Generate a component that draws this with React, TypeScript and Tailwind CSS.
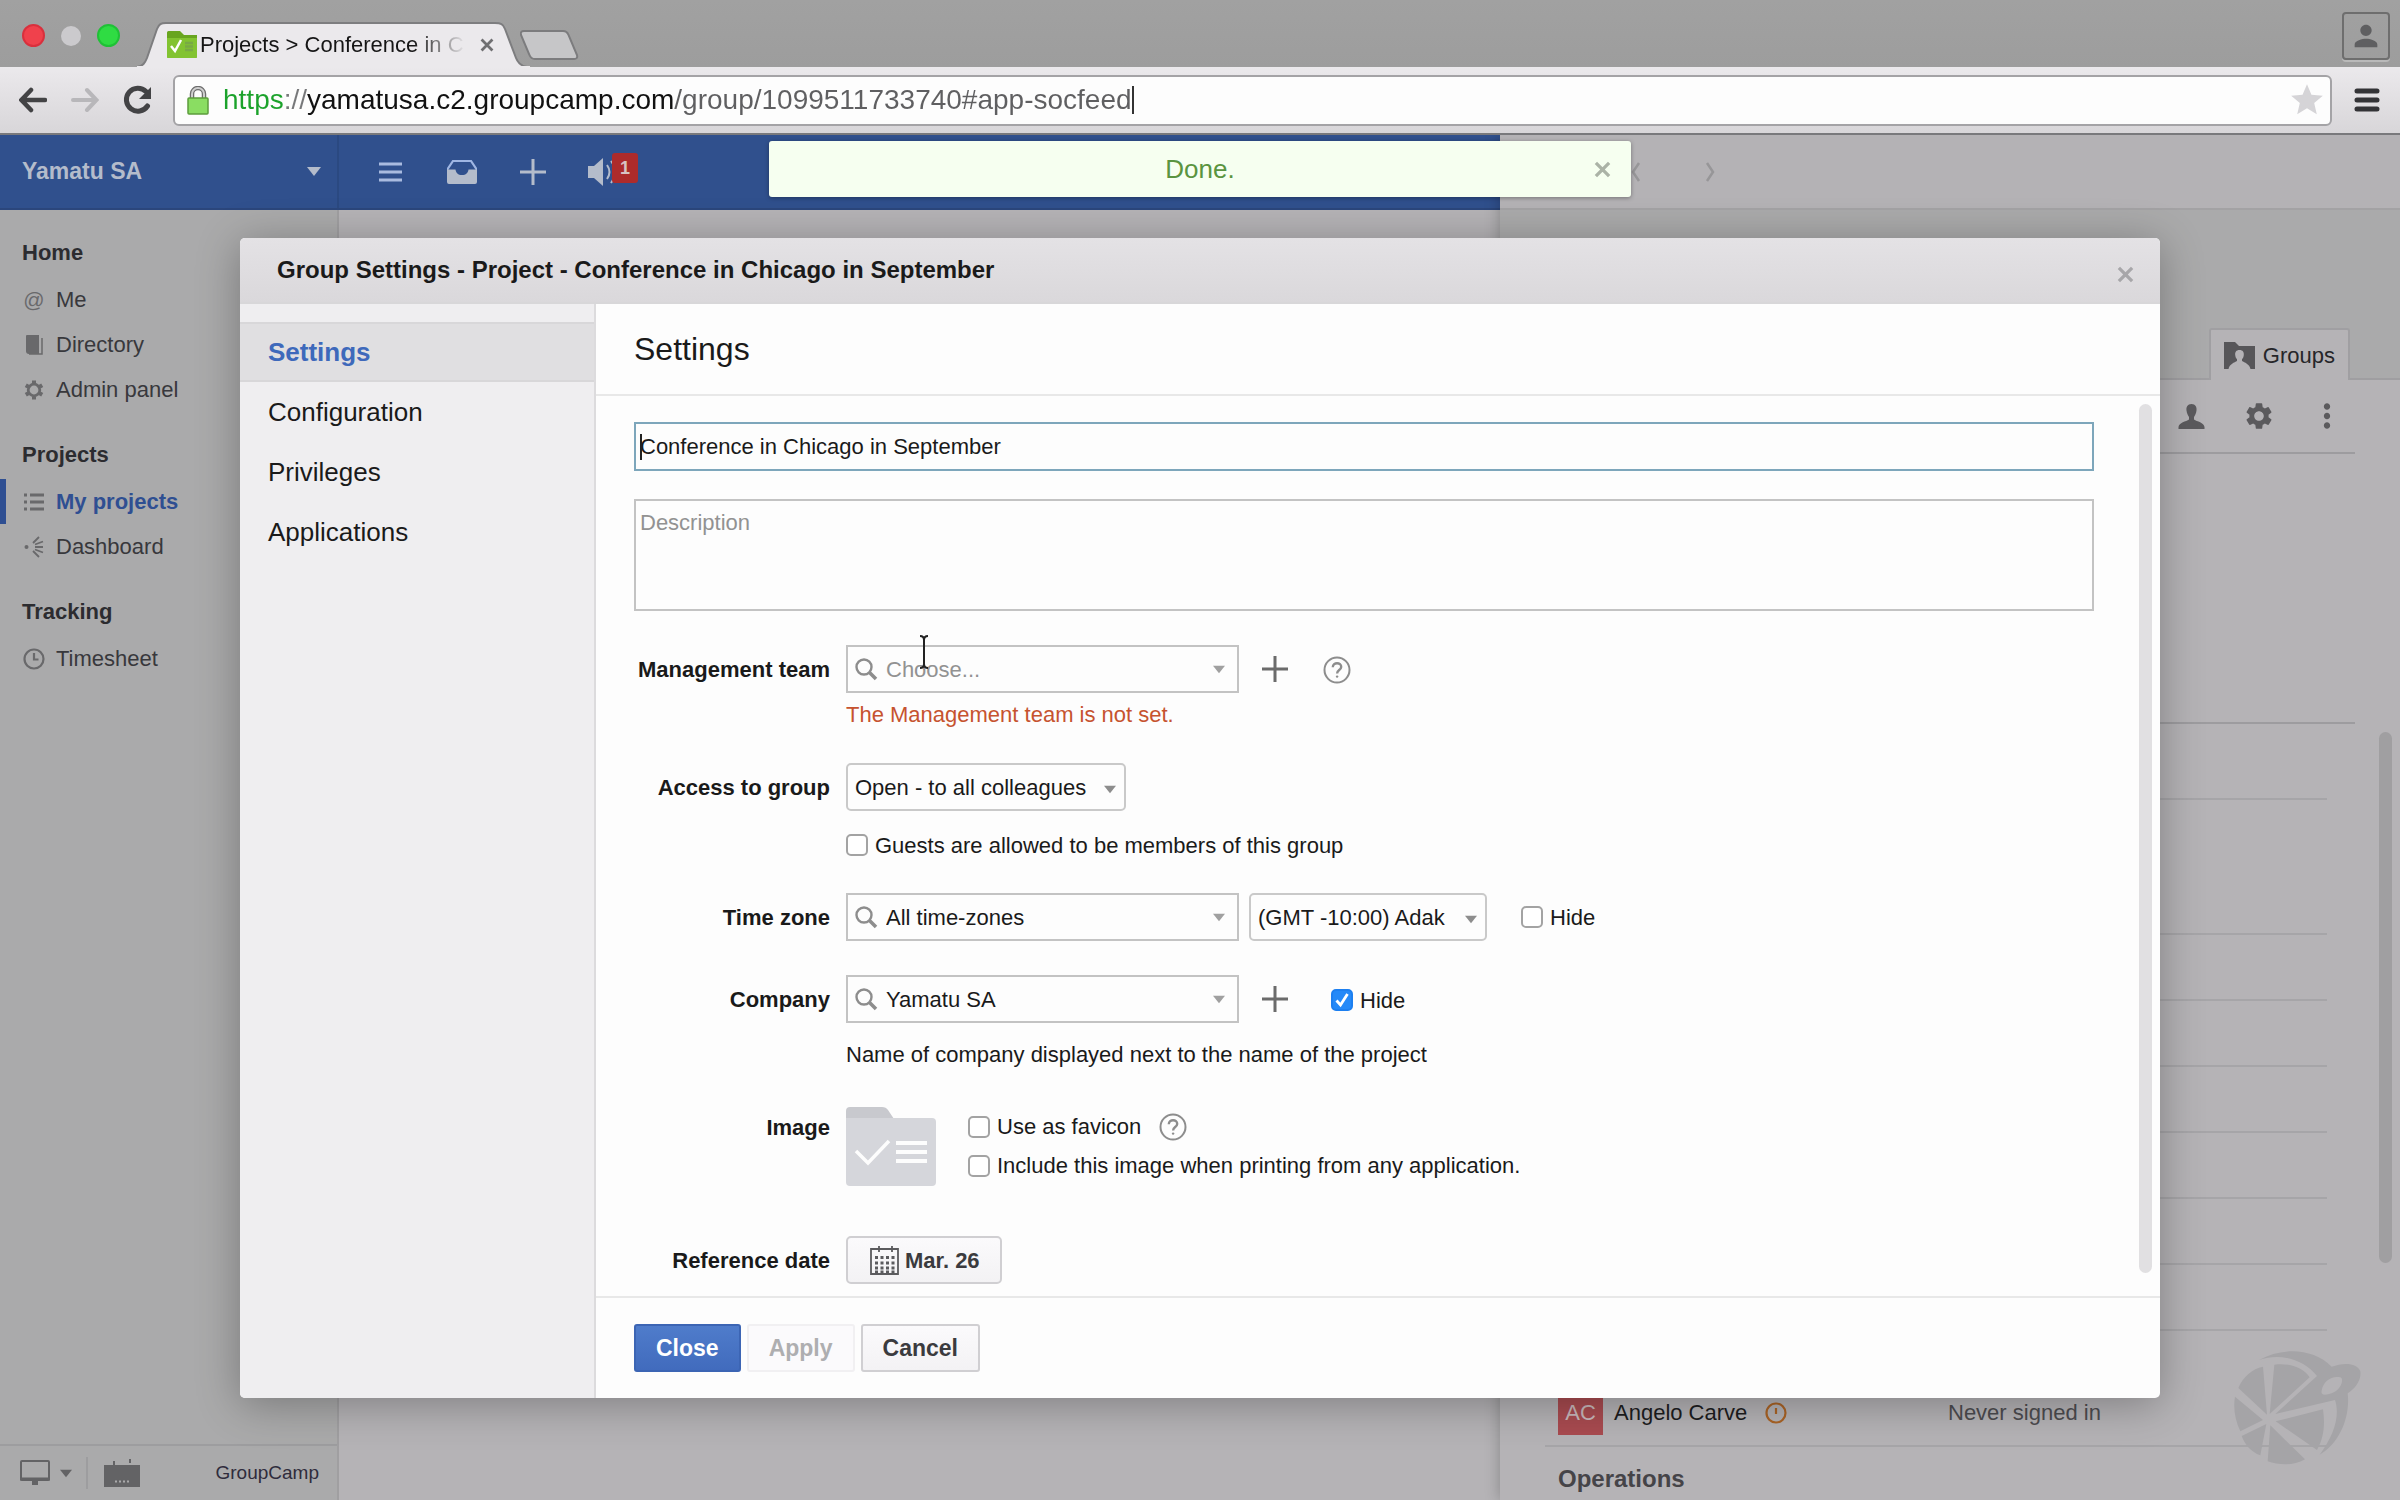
import React, { useState } from 'react';
import { MdPerson, MdSettings, MdStar, MdMoreVert } from 'react-icons/md';

const HEADING = 'flex h-[49px] items-center pl-[22px] font-bold text-[#2c2c30]';

const Caret: React.FC<{ className?: string }> = ({ className }) => (
  <svg className={className} width="14" height="9" viewBox="0 0 14 9" fill="currentColor" aria-hidden="true"><path d="M0 0h14L7 9z" /></svg>
);

const Cross: React.FC<{ size: number }> = ({ size }) => (
  <svg width={size} height={size} viewBox="0 0 18 18" stroke="currentColor" strokeWidth="3.500" aria-hidden="true"><path d="M2 2l14 14M16 2L2 16" /></svg>
);

const Plus: React.FC = () => (
  <svg width="28" height="28" viewBox="0 0 28 28" stroke="currentColor" strokeWidth="3" aria-hidden="true"><path d="M14 1v26M1 14h26" /></svg>
);

const Help: React.FC = () => (
  <button type="button" aria-label="Help" className="text-[#8d8d8d]">
    <svg width="28" height="28" viewBox="0 0 28 28" fill="none" stroke="currentColor" strokeWidth="2">
      <circle cx="14" cy="14" r="12.5" />
      <path d="M9.8 11.2c0-5.4 8.6-5.2 8.4-.2-.1 3-4.1 3.100-4.100 6.400" strokeWidth="2.400" />
      <circle cx="14.100" cy="20.600" r="1.200" fill="currentColor" stroke="none" />
    </svg>
  </button>
);

/* ---------- Browser window ---------- */

const TabStrip: React.FC = () => (
  <div className="flex h-[67px] items-end bg-gradient-to-b from-[#a1a1a1] to-[#9d9d9d]">
    <div className="flex h-full items-center gap-4 pt-1 pl-[22px]">
      <span className="h-[23px] w-[23px] rounded-full border-2 border-[#d9303d] bg-[#f0414c]" />
      <span className="h-5 w-5 rounded-full bg-[#cbcacd]" />
      <span className="h-[23px] w-[23px] rounded-full border-2 border-[#1fc136] bg-[#2fdc43]" />
    </div>
    <div className="relative ml-[17px] flex h-[45px] w-[393px] items-center pl-[30px]">
      <svg className="absolute inset-0" width="393" height="45" viewBox="0 0 393 45" aria-hidden="true">
        <path d="M0 45C6 44 8 41 10 36L20 7C22 2 24 1 29 1H358C364 1 366 2 368 7L379 36C381 41 384 44 390 45z" fill="#ebe9ec" stroke="#7d7d7f" strokeWidth="2" />
        <path d="M0 45h393" stroke="#ebe9ec" strokeWidth="2" />
      </svg>
      <svg className="relative shrink-0" width="30" height="27" viewBox="0 0 30 27" aria-hidden="true">
        <path d="M0 1.500Q0 0 1.500 0H13l4 4H30V25.500Q30 27 28.500 27H1.500Q0 27 0 25.500z" fill="#68a51f" />
        <path d="M0 7h30v18.500Q30 27 28.500 27H1.500Q0 27 0 25.500z" fill="#82c331" />
        <path d="M4 15l4 5 6-11" fill="none" stroke="#fff" strokeWidth="2.500" />
        <path d="M18 12h8M18 15.500h8M18 19h8" stroke="#78a945" strokeWidth="2.500" />
      </svg>
      <span className="relative ml-[3px] w-[266px] overflow-hidden whitespace-nowrap bg-gradient-to-r from-[#151515] from-80% to-transparent bg-clip-text text-transparent">Projects &gt; Conference in C</span>
      <button type="button" aria-label="Close tab" className="relative ml-3.5 text-[#6f6f71]"><Cross size={14} /></button>
    </div>
    <button type="button" aria-label="New tab" className="mb-[7px] -ml-2.5">
      <svg width="59" height="30" viewBox="0 0 59 30"><path d="M4 1H43Q47 1 48.500 5L57 25Q58 29 54 29H15Q11 29 9.500 25L1 5Q0 1 4 1z" fill="#c6c6c8" stroke="#7c7c7e" strokeWidth="2" /></svg>
    </button>
    <button type="button" aria-label="Profile" className="mr-2.5 mb-[7px] ml-auto grid h-12 w-12 place-items-center rounded border-2 border-[#6e6e6e] text-[#5f5f61] shadow-[0_2px_0_#b9b9b9]">
      <MdPerson size={34} />
    </button>
  </div>
);

const Toolbar: React.FC = () => (
  <div className="flex h-[68px] items-center border-b-2 border-[#79797c] bg-gradient-to-b from-[#ebe9ec] to-[#d8d6d9] pr-5 pl-[19px]">
    <div className="flex items-center gap-6">
      <button type="button" aria-label="Back" className="text-[#434345]">
        <svg width="28" height="26" viewBox="0 0 28 26" fill="none" stroke="currentColor" strokeWidth="4.500" strokeLinecap="round"><path d="M26 13H3M12 3L2.500 13 12 23" /></svg>
      </button>
      <button type="button" aria-label="Forward" className="text-[#b8b7ba]">
        <svg width="28" height="26" viewBox="0 0 28 26" fill="none" stroke="currentColor" strokeWidth="4" strokeLinecap="round"><path d="M2 13h23M16 3l9.500 10L16 23" /></svg>
      </button>
      <button type="button" aria-label="Reload" className="text-[#434345]">
        <svg width="30" height="30" viewBox="0 0 30 30" fill="none" stroke="currentColor" strokeWidth="5"><path d="M24.500 21A11.500 11.500 0 1 1 23 6.500" strokeLinecap="round" /><path d="M28 2v12H16z" fill="currentColor" stroke="none" /></svg>
      </button>
    </div>
    <div className="ml-5 flex h-[51px] flex-1 items-center rounded-md border-2 border-[#a4a3a6] bg-[#fdfdfd] pr-1 pl-3">
      <svg width="22" height="29" viewBox="0 0 22 29" aria-hidden="true">
        <path d="M5 12V8a6 6 0 0 1 12 0v4" fill="none" stroke="#6d6d6d" strokeWidth="4.500" />
        <path d="M5 12V8a6 6 0 0 1 12 0v4" fill="none" stroke="#cfcfcf" strokeWidth="2" />
        <rect x="1" y="12" width="20" height="16" rx="1" fill="#8add62" stroke="#5c9c3c" strokeWidth="1.500" />
      </svg>
      <input
        aria-label="Address"
        readOnly
        value="https://yamatusa.c2.groupcamp.com/group/1099511733740#app-socfeed"
        className="ml-3.5 field-sizing-content bg-[linear-gradient(to_right,#1ba22b_60px,#77787a_60px,#77787a_84px,#111_84px,#111_450px,#5f5f61_450px)] bg-clip-text text-[28px] leading-9 text-transparent outline-none"
      />
      <span className="h-7 w-0.5 bg-[#333]" />
      <button type="button" aria-label="Bookmark" className="ml-auto text-[#d5d4d7]"><MdStar size={38} /></button>
    </div>
    <button type="button" aria-label="Menu" className="ml-[22px] text-[#333336]">
      <svg width="26" height="26" viewBox="0 0 26 26" stroke="currentColor" strokeWidth="5" strokeLinecap="round"><path d="M3 4h20M3 13h20M3 22h20" /></svg>
    </button>
  </div>
);

/* ---------- Application behind the dialog ---------- */

const NAV = [
  { title: 'Home', items: ['Me', 'Directory', 'Admin panel'] },
  { title: 'Projects', items: ['My projects', 'Dashboard'] },
  { title: 'Tracking', items: ['Timesheet'] },
];

const NAV_ICONS: Record<string, React.ReactNode> = {
  'Me': <span className="text-[21px] leading-none">@</span>,
  'Directory': (
    <svg width="20" height="20" viewBox="0 0 20 20"><path d="M3 0H15V19H5Q2 19 2 16V1Q2 0 3 0z" fill="currentColor" /><path d="M5 19H18V3" fill="none" stroke="currentColor" strokeWidth="1.500" /></svg>
  ),
  'Admin panel': (
    <svg width="20" height="20" viewBox="0 0 20 20" fill="none" stroke="currentColor"><circle cx="10" cy="10" r="5.800" strokeWidth="2.800" /><path d="M10 .5v3M10 16.500v3M1.800 5.200l2.600 1.500M15.600 13.300l2.600 1.500M1.800 14.800l2.600-1.500M15.600 6.700l2.600-1.500" strokeWidth="4" /></svg>
  ),
  'My projects': (
    <svg width="20" height="18" viewBox="0 0 20 18" stroke="currentColor" strokeWidth="3"><path d="M0 2h3M6 2h14M0 9h3M6 9h14M0 16h3M6 16h14" /></svg>
  ),
  'Dashboard': (
    <svg width="20" height="24" viewBox="0 0 20 24" fill="none" stroke="currentColor" strokeWidth="1.800"><circle cx="2.500" cy="12" r="2" fill="currentColor" stroke="none" /><path d="M9 8l6-6M11 9.500l8-3M11 12h8M11 14.500l8 3M9 16l6 6" /></svg>
  ),
  'Timesheet': (
    <svg width="22" height="22" viewBox="0 0 22 22" fill="none" stroke="currentColor" strokeWidth="2.200"><circle cx="11" cy="11" r="9.500" /><path d="M11 5v6.500h4.500" /></svg>
  ),
};

const Sidebar: React.FC = () => (
  <aside className="flex w-[339px] flex-col border-r-2 border-[#a09fa1] bg-[#aaaaab]">
    <nav className="flex-1">
      {NAV.map(group => (
        <div key={group.title} className="pt-[18px]">
          <h3 className={HEADING}>{group.title}</h3>
          {group.items.map(item => {
            const active = item === 'My projects';
            return (
              <a key={item} href="#" className={active ? 'flex h-[45px] items-center border-l-[6px] border-[#2f4f92] pl-[15px] font-bold text-[#2f4f92]' : 'flex h-[45px] items-center pl-[21px] text-[#38383c]'}>
                <span className="grid w-[26px] place-items-center text-[#69696b]">{NAV_ICONS[item]}</span>
                <span className="ml-[9px]">{item}</span>
              </a>
            );
          })}
        </div>
      ))}
    </nav>
    <div className="flex h-14 items-center border-t-2 border-[#9d9d9f] pr-[18px] pl-5 text-[#636365]">
      <svg width="30" height="26" viewBox="0 0 30 26" aria-hidden="true"><rect x="1" y="1" width="28" height="19" rx="1" fill="none" stroke="currentColor" strokeWidth="2" /><path d="M0 17.500h30v3H0zM12 20h6v5h-6z" fill="currentColor" /></svg>
      <Caret className="ml-2.5 w-3" />
      <span className="ml-3.5 h-8 w-0.5 bg-[#9d9d9f]" />
      <svg className="ml-4" width="36" height="28" viewBox="0 0 36 28" aria-hidden="true"><path d="M0 6h36v22H0zM9 2h2v4H9zM25 0h2v4h-2z" fill="currentColor" /><path d="M11 22.500h15" stroke="#aaaaab" strokeWidth="2" strokeDasharray="2 2" /></svg>
      <span className="ml-auto text-[19px] text-[#2f2c3c]">GroupCamp</span>
    </div>
  </aside>
);

const AppHeader: React.FC = () => (
  <header className="flex h-[75px] items-center border-b-2 border-[#2b467c] bg-[#30508d] text-[#b4bccb]">
    <button type="button" className="flex h-full w-[339px] items-center justify-between border-r-2 border-[#2b4981] pr-4 pl-[22px] text-[23px] font-bold">
      Yamatu SA
      <Caret />
    </button>
    <div className="flex items-center pl-4">
      <button type="button" aria-label="Menu" className="grid w-[71px] place-items-center text-[#a9bbe0]">
        <svg width="23" height="20" viewBox="0 0 23 20" stroke="currentColor" strokeWidth="3"><path d="M0 2h23M0 10h23M0 18h23" /></svg>
      </button>
      <button type="button" aria-label="Inbox" className="grid w-[71px] place-items-center">
        <svg width="30" height="24" viewBox="0 0 30 24"><path d="M0 10L6 1H24L30 10" fill="none" stroke="#9fb6e3" strokeWidth="2.200" /><path d="M0 9.500H8.500C9 13 11 15 15 15S21 13 21.500 9.500H30V22Q30 24 28 24H2Q0 24 0 22z" fill="currentColor" /></svg>
      </button>
      <button type="button" aria-label="Add" className="grid w-[71px] place-items-center"><Plus /></button>
      <button type="button" aria-label="Notifications" className="relative ml-5 h-[30px] w-[50px]">
        <svg width="30" height="30" viewBox="0 0 30 30"><path d="M0 9h6l9-8v28l-9-8H0z" fill="currentColor" /><path d="M19 8q5 7 0 14M23 4q8 11 0 22" fill="none" stroke="currentColor" strokeWidth="2" /></svg>
        <span className="absolute -top-1 right-0 h-[30px] w-[26px] rounded-[3px] bg-[#ad2b2b] text-lg leading-[30px] font-bold text-[#d8c3c3]">1</span>
      </button>
    </div>
  </header>
);

const GroupPanel: React.FC = () => (
  <section className="relative z-10 flex flex-1 flex-col overflow-hidden bg-[#b5b3b6] shadow-[0_0_14px_rgba(0,0,0,0.25)]">
    <div className="flex h-[75px] shrink-0 items-center gap-[50px] border-b-2 border-[#a3a2a4] bg-[#b4b2b5] pl-[124px] text-[#979698]">
      <button type="button" aria-label="Previous"><svg width="24" height="24" viewBox="0 0 24 24" fill="none" stroke="currentColor" strokeWidth="2.500"><path d="M15 3L9 12l6 9" /></svg></button>
      <button type="button" aria-label="Next"><svg width="24" height="24" viewBox="0 0 24 24" fill="none" stroke="currentColor" strokeWidth="2.500"><path d="M9 3l6 9-6 9" /></svg></button>
    </div>
    <div className="flex h-[170px] shrink-0 items-end justify-end border-b-2 border-[#9f9ea1] bg-[#aaaaab] pr-[50px]">
      <a href="#" className="-mb-0.5 flex h-[52px] items-center gap-2 rounded-t-[3px] border-2 border-b-0 border-[#a09fa2] bg-[#b5b3b6] px-[13px] text-[#262629]">
        <svg width="31" height="27" viewBox="0 0 31 27" aria-hidden="true">
          <path d="M0 0h11l4 4h16v23H0z" fill="#575659" />
          <path d="M15.500 8c3.400 0 4.600 2.300 4.300 5-.2 2.200-1 3.400-1.800 4.300v1.700c2.500 1.500 7.500 3 8.500 8h-22c1-5 6-6.500 8.500-8v-1.700c-.8-.9-1.600-2.100-1.800-4.300-.3-2.700.9-5 4.300-5z" fill="#b5b3b6" />
        </svg>
        Groups
      </a>
    </div>
    <div className="mr-[45px] ml-[45px] flex h-[74px] shrink-0 items-center justify-end gap-3 border-b-2 border-[#9d9c9f] text-[#5b5a5d]">
      <button type="button" aria-label="Members" className="grid w-14 place-items-center">
        <svg width="27" height="25" viewBox="0 0 27 25" fill="currentColor"><path d="M13.500 0c4 0 5.500 3 5 6.500-.300 3-1.500 5-2.500 6.500v2.500c3 2 10 3 10.500 7.500v2H.500v-2C1 18.500 8 17.500 11 15.500V13C10 11.500 8.800 9.500 8.500 6.500 8 3 9.500 0 13.500 0z" /></svg>
      </button>
      <button type="button" aria-label="Options" className="grid w-14 place-items-center"><MdSettings size={32} /></button>
      <button type="button" aria-label="More" className="grid w-14 place-items-center"><MdMoreVert size={38} /></button>
    </div>
    <div className="mx-[45px] h-[270px] shrink-0 border-b-2 border-[#9d9c9f]" />
    <div className="mr-[73px] ml-[45px] shrink-0 divide-y-2 divide-[#a6a5a8] border-b-2 border-[#a6a5a8]">
      <div className="h-[76px]" />
      <div className="h-[135px]" />
      <div className="h-[66px]" />
      <div className="h-[66px]" />
      <div className="h-[66px]" />
      <div className="h-[66px]" />
      <div className="h-[66px]" />
      <div className="h-[66px]" />
      <div className="flex h-[114px] items-end pb-2.5 pl-[13px]">
        <div className="flex w-[390px] items-center text-[#1d1d1f]">
          <span className="grid h-[45px] w-[45px] place-items-center bg-[#a94b50] text-[#c9b9bc]">AC</span>
          <span className="ml-[11px]">Angelo Carve</span>
          <svg className="ml-[18px]" width="22" height="22" viewBox="0 0 22 22" fill="none" stroke="#ab6426" strokeWidth="2.200" aria-label="Pending"><circle cx="11" cy="11" r="9.500" /><path d="M11 6v6" /></svg>
        </div>
        <span className="flex h-[45px] items-center text-[#4d4c50]">Never signed in</span>
      </div>
    </div>
    <h3 className="ml-[58px] pt-[17px] text-2xl leading-[30px] font-bold text-[#454448]">Operations</h3>
    <div className="absolute top-[597px] right-2 h-[531px] w-[13px] rounded-full bg-[#a09fa1]" />
    <svg className="absolute right-[38px] bottom-[34px]" width="129" height="115" viewBox="218 275 387 345" fill="#a5a4a7" aria-hidden="true">
      <path d="M296 302C370 262 460 268 514 322 546 310 590 308 600 336 604 364 582 390 562 402 570 470 540 550 478 586 520 530 540 470 524 422L345 464 470 350C430 300 360 280 296 302zM484 394C480 412 500 408 522 398 542 388 552 358 540 354 514 348 488 366 484 394z" fillRule="evenodd" />
      <path d="M342 316C390 310 430 326 448 354L328 464zM308 322L320 466 234 386C248 352 276 328 308 322zM224 412L308 482 240 516C224 482 218 446 224 412zM244 530L318 494 300 588C272 578 254 556 244 530zM330 498L434 600C400 620 356 618 322 606zM346 486L488 450C494 492 492 534 470 572z" />
    </svg>
  </section>
);

/* ---------- Dialog form ---------- */

const Row: React.FC<{ label: string; htmlFor?: string; className?: string; children: React.ReactNode }> = ({ label, htmlFor, className = 'mt-[34px]', children }) => (
  <div className={`flex items-start gap-4 ${className}`}>
    <label htmlFor={htmlFor} className="flex h-12 w-[196px] shrink-0 items-center justify-end whitespace-nowrap font-bold">{label}</label>
    <div>{children}</div>
  </div>
);

const Combo: React.FC<{ id: string; value?: string; children?: React.ReactNode }> = ({ id, value, children }) => (
  <div className="relative flex h-12 w-[393px] items-center border-2 border-[#c3c3c3] bg-[#fdfdfd] pr-3 pl-1.5">
    <svg className="shrink-0 text-[#8d8d8d]" width="24" height="24" viewBox="0 0 24 24" fill="none" stroke="currentColor" aria-hidden="true"><circle cx="10" cy="10" r="7.500" strokeWidth="2.400" /><path d="M15.500 15.500L22 22" strokeWidth="3.500" /></svg>
    <input id={id} type="text" placeholder="Choose..." defaultValue={value} className="ml-2 w-full bg-transparent outline-none placeholder:text-[#929292]" />
    <Caret className="w-3 shrink-0 text-[#a0a0a0]" />
    {children}
  </div>
);

const Select: React.FC<{ id?: string; label?: string; option: string; className: string }> = ({ id, label, option, className }) => (
  <div className={`relative ${className}`}>
    <select id={id} aria-label={label} className="h-12 w-full appearance-none rounded-[5px] border-2 border-[#c9c9c9] bg-[#fdfdfd] pl-[7px] outline-none">
      <option>{option}</option>
    </select>
    <Caret className="pointer-events-none absolute top-[22px] right-2.5 w-3 text-[#8d8d8d]" />
  </div>
);

const Check: React.FC<{ label: string; checked?: boolean; className?: string }> = ({ label, checked = false, className = '' }) => {
  const [on, setOn] = useState(checked);
  return (
    <label className={`flex items-center gap-[7px] whitespace-nowrap ${className}`}>
      <span className="relative grid h-[22px] w-[22px]">
        <input type="checkbox" checked={on} onChange={e => setOn(e.target.checked)} className="h-[22px] w-[22px] appearance-none rounded-[5px] border-2 border-[#a3a3a3] bg-white checked:border-[#1c7ff0] checked:bg-[#2489f8]" />
        {on && <svg className="pointer-events-none absolute inset-0" width="22" height="22" viewBox="0 0 22 22" fill="none" stroke="#fff" strokeWidth="2.800"><path d="M5.500 11.500l4 4.500 7-11" /></svg>}
      </span>
      {label}
    </label>
  );
};

const SECTIONS = ['Settings', 'Configuration', 'Privileges', 'Applications'];

const GroupSettings: React.FC = () => (
  <div role="dialog" aria-label="Group Settings" className="flex w-4/5 flex-col overflow-hidden rounded-[5px] bg-[#fdfdfd] text-[#1a1a1a] shadow-[0_6px_44px_rgba(0,0,0,0.3)]">
    <div className="flex h-[66px] shrink-0 items-center justify-between border-b-2 border-[#d8d7d9] bg-gradient-to-b from-[#e4e2e5] to-[#dad8db] pr-[26px] pl-[37px]">
      <h2 className="text-2xl font-bold">Group Settings - Project - Conference in Chicago in September</h2>
      <button type="button" aria-label="Close dialog" className="mt-2 text-[#a7a6a9]"><Cross size={17} /></button>
    </div>
    <div className="flex min-h-0 flex-1">
      <nav className="w-[356px] shrink-0 border-r-2 border-[#dcdbdd] bg-[#efeef0] pt-[18px] text-[26px]">
        {SECTIONS.map((s, i) => (
          <a key={s} href="#" className={i === 0 ? 'flex h-[60px] items-center border-y-2 border-[#d8d7d9] bg-[#e0dfe1] pl-7 font-bold text-[#3e69bb]' : 'flex h-[60px] items-center pl-7'}>{s}</a>
        ))}
      </nav>
      <div className="relative flex min-w-0 flex-1 flex-col">
        <h2 className="flex h-[92px] shrink-0 items-center border-b-2 border-[#e8e8e8] pl-[38px] text-[32px]">Settings</h2>
        <form className="min-h-0 flex-1 overflow-hidden pt-[26px] pr-[66px] pl-[38px]" onSubmit={e => e.preventDefault()}>
          <div className="relative">
            <input aria-label="Name" type="text" defaultValue="Conference in Chicago in September" className="block h-[49px] w-full border-2 border-[#7da6bb] bg-[#fdfdfd] pl-1 outline-none" />
            <span className="absolute top-3 left-1.5 h-[26px] w-0.5 bg-[#222]" />
          </div>
          <textarea aria-label="Description" placeholder="Description" className="mt-7 block h-[112px] w-full resize-none border-2 border-[#c3c3c3] bg-[#fdfdfd] py-[5px] pl-1 outline-none placeholder:text-[#929292]" />

          <Row label="Management team" htmlFor="team">
            <div className="flex items-center">
              <Combo id="team">
                <svg className="absolute -top-3 left-[69px]" width="14" height="34" viewBox="0 0 14 34" fill="none" stroke="#222" strokeWidth="2" aria-hidden="true"><path d="M3 1q4 0 4 4 0-4 4-4M7 5v24M3 33q4 0 4-4 0 4 4 4" /></svg>
              </Combo>
              <button type="button" aria-label="Add team" className="ml-[22px] text-[#6b6b6b]"><Plus /></button>
              <span className="ml-[34px] flex pt-0.5"><Help /></span>
            </div>
            <p className="mt-2 leading-7 text-[#c6532f]">The Management team is not set.</p>
          </Row>

          <Row label="Access to group" htmlFor="access">
            <Select id="access" option="Open - to all colleagues" className="w-[280px]" />
            <Check label="Guests are allowed to be members of this group" className="mt-5 h-7" />
          </Row>

          <Row label="Time zone" htmlFor="zone">
            <div className="flex items-center">
              <Combo id="zone" value="All time-zones" />
              <Select label="City" option="(GMT -10:00) Adak" className="ml-2.5 w-[238px]" />
              <Check label="Hide" className="ml-[34px]" />
            </div>
          </Row>

          <Row label="Company" htmlFor="company">
            <div className="flex items-center">
              <Combo id="company" value="Yamatu SA" />
              <button type="button" aria-label="Add company" className="ml-[22px] text-[#6b6b6b]"><Plus /></button>
              <Check label="Hide" checked className="ml-[42px] pt-0.5" />
            </div>
            <p className="mt-[18px] leading-7">Name of company displayed next to the name of the project</p>
          </Row>

          <Row label="Image">
            <div className="flex items-start gap-8 pt-1">
              <svg width="90" height="79" viewBox="0 0 90 79" aria-hidden="true">
                <path d="M4 0H36Q40 0 42 3L48 12V24H0V4Q0 0 4 0z" fill="#c8c9ce" />
                <path d="M0 11H86Q90 11 90 15V75Q90 79 86 79H4Q0 79 0 75z" fill="#d5d6db" />
                <path d="M10 44l12 12 21-22" fill="none" stroke="#fdfdfd" strokeWidth="3.500" />
                <path d="M50 36h31M50 45h31M50 54h31" stroke="#fdfdfd" strokeWidth="4" />
              </svg>
              <div>
                <div className="flex h-[39px] items-center gap-[18px]">
                  <Check label="Use as favicon" />
                  <Help />
                </div>
                <Check label="Include this image when printing from any application." className="h-[39px]" />
              </div>
            </div>
          </Row>

          <Row label="Reference date" className="mt-[50px]">
            <button type="button" className="flex h-12 items-center gap-1.5 rounded-[5px] border-2 border-[#d0cfd2] bg-gradient-to-b from-[#fbfafc] to-[#f3f2f4] pr-5 pl-[22px] font-bold text-[#3b3b3e]">
              <svg width="29" height="29" viewBox="0 0 29 29" fill="none" stroke="#5b5b5e" aria-hidden="true">
                <path d="M1 3h27v25H1z" strokeWidth="1.800" />
                <path d="M9 0v6M22 0v6" strokeWidth="1.800" />
                <path d="M5 11.500h20M5 17h20M5 22h20M5 26h20" strokeWidth="3" strokeDasharray="3 2.500" />
              </svg>
              Mar. 26
            </button>
          </Row>
        </form>
        <div className="absolute top-[100px] right-2 bottom-[125px] w-[13px] rounded-full bg-[#e1e0e2]" />
        <div className="flex h-[102px] shrink-0 items-center gap-1.5 border-t-2 border-[#e8e8e8] pl-[38px] text-[23px] font-bold">
          <button type="button" className="h-12 rounded-[3px] border-2 border-[#3c65b4] bg-gradient-to-b from-[#4f7ccb] to-[#416bbd] px-5 text-white">Close</button>
          <button type="button" className="h-12 rounded-[3px] border-2 border-[#f1f0f2] bg-[#fbfafc] px-5 text-[#aeaeb0]">Apply</button>
          <button type="button" className="h-12 rounded-[3px] border-2 border-[#d0cfd2] bg-gradient-to-b from-[#fbfafc] to-[#f3f2f4] px-5 text-[#3b3b3e]">Cancel</button>
        </div>
      </div>
    </div>
  </div>
);

const App: React.FC = () => (
  <div className="flex h-screen flex-col overflow-hidden font-['Liberation_Sans',Arial,sans-serif] text-[22px]">
    <TabStrip />
    <Toolbar />
    <main className="relative flex min-h-0 flex-1 overflow-hidden">
      <div className="flex w-[62.5%] flex-col bg-[#b5b3b6]">
        <AppHeader />
        <div className="flex min-h-0 flex-1"><Sidebar /></div>
      </div>
      <GroupPanel />
      <div className="absolute inset-0 z-20 flex justify-center pt-[103px] pb-[102px]">
        <GroupSettings />
      </div>
      <div role="status" className="absolute top-1.5 left-1/2 z-30 flex h-14 w-[862px] -translate-x-1/2 items-center rounded-[3px] bg-[#f6fff0] px-5 text-[26px] text-[#5a9440] shadow-[0_1px_4px_rgba(0,0,0,0.35)]">
        <span className="flex-1 pl-[17px] text-center">Done.</span>
        <button type="button" aria-label="Dismiss" className="text-[#abb3a6]"><Cross size={17} /></button>
      </div>
    </main>
  </div>
);

export default App;
